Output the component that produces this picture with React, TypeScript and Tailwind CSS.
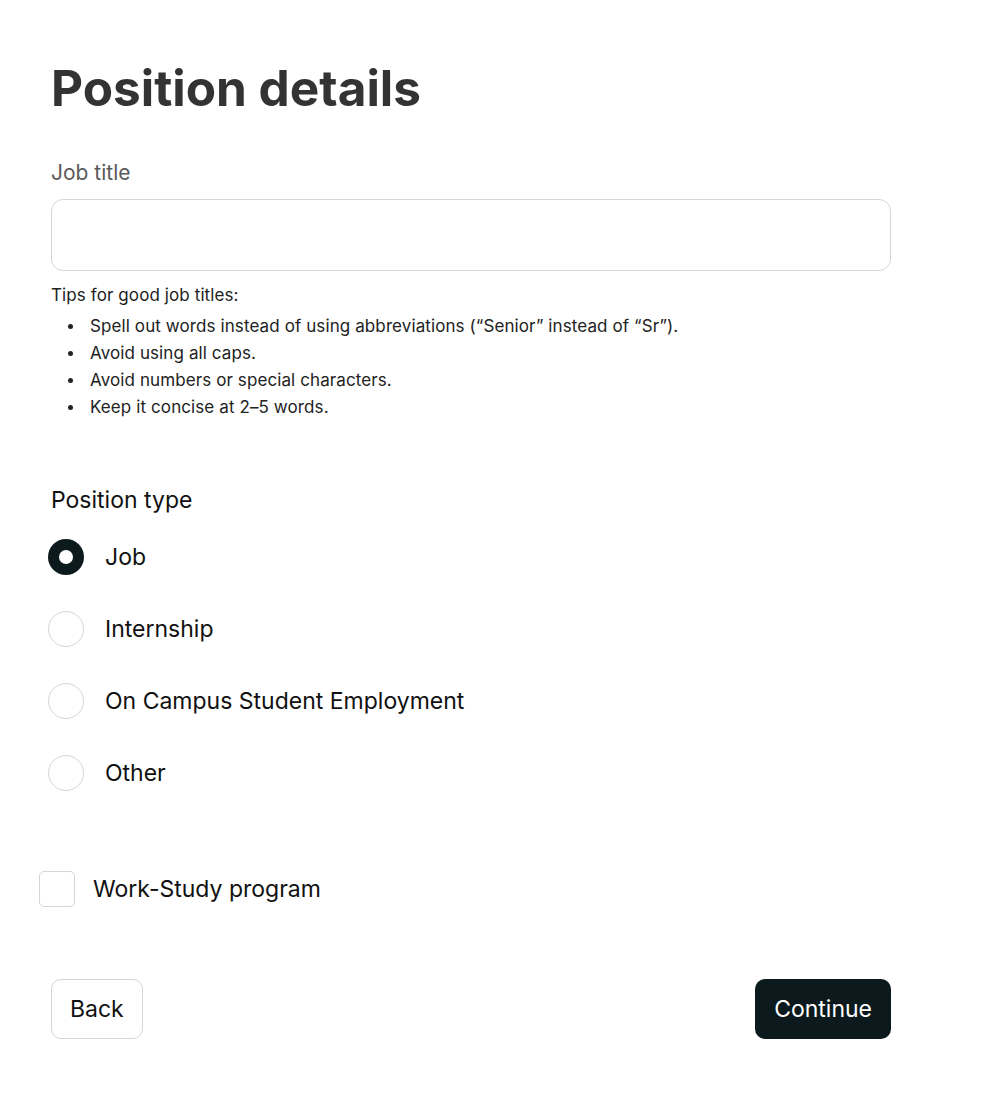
import { useState } from "react";

const TYPES = ["Job", "Internship", "On Campus Student Employment", "Other"];

const TIPS = [
  "Spell out words instead of using abbreviations (\u201cSenior\u201d instead of \u201cSr\u201d).",
  "Avoid using all caps.",
  "Avoid numbers or special characters.",
  "Keep it concise at 2\u20135 words.",
];

export default function App() {
  const [type, setType] = useState("Job");
  const [workStudy, setWorkStudy] = useState(false);
  const [title, setTitle] = useState("");

  return (
    <div className="min-h-screen bg-white font-['Inter',sans-serif] text-[#111]">
      <div className="w-[840px] ml-[51px] pt-[58px]">
        <h1 className="text-[49.5px] font-bold leading-[60px] text-[#333]">Position details</h1>

        <label className="block mt-[41px] text-[21px] leading-[28px] text-[#5a5a5a]">Job title</label>
        <input
          value={title}
          onChange={(e) => setTitle(e.target.value)}
          className="mt-[12px] block w-full h-[72px] rounded-[12px] border border-[#d6d6d6] px-4 text-[20px] outline-none"
        />

        <p className="mt-[12px] text-[17px] leading-[24px] tracking-[0.1px] text-[#222]">Tips for good job titles:</p>
        <ul className="mt-[6px] text-[17px] leading-[27px] tracking-[0.1px] text-[#222]">
          {TIPS.map((t) => (
            <li key={t} className="flex items-center">
              <span className="ml-[17px] mr-[17px] w-[5px] h-[5px] rounded-full bg-[#222] shrink-0" />
              <span>{t}</span>
            </li>
          ))}
        </ul>

        {/* Position type */}
        <h2 className="mt-[64px] text-[23px] leading-[30px] text-[#111]">Position type</h2>
        <div className="mt-[24px] -ml-[3px] flex flex-col gap-[36px]">
          {TYPES.map((t) => {
            const on = t === type;
            return (
              <button
                key={t}
                type="button"
                onClick={() => setType(t)}
                className="flex items-center gap-[21px] text-left"
              >
                <span
                  className={`w-[36px] h-[36px] rounded-full flex items-center justify-center ${
                    on ? "bg-[#0c1a1d]" : "border border-[#d6d6d6] bg-white"
                  }`}
                >
                  {on && <span className="w-[14px] h-[14px] rounded-full bg-white" />}
                </span>
                <span className="text-[23px] leading-[30px] text-[#111]">{t}</span>
              </button>
            );
          })}
        </div>

        {/* Work-study */}
        <button
          type="button"
          onClick={() => setWorkStudy((v) => !v)}
          className="mt-[80px] -ml-[12px] flex items-center gap-[18px]"
        >
          <span
            className={`w-[36px] h-[36px] rounded-[5px] border ${
              workStudy ? "bg-[#0c1a1d] border-[#0c1a1d]" : "border-[#d6d6d6] bg-white"
            }`}
          />
          <span className="text-[23px] leading-[30px] text-[#111]">Work-Study program</span>
        </button>

        <div className="mt-[72px] flex justify-between">
          <button
            type="button"
            className="h-[60px] px-[18px] rounded-[10px] border border-[#d6d6d6] bg-white text-[23px] text-[#111]"
          >
            Back
          </button>
          <button
            type="button"
            className="h-[60px] px-[19px] rounded-[10px] bg-[#0c1a1d] text-[23px] text-white"
          >
            Continue
          </button>
        </div>
      </div>
    </div>
  );
}
